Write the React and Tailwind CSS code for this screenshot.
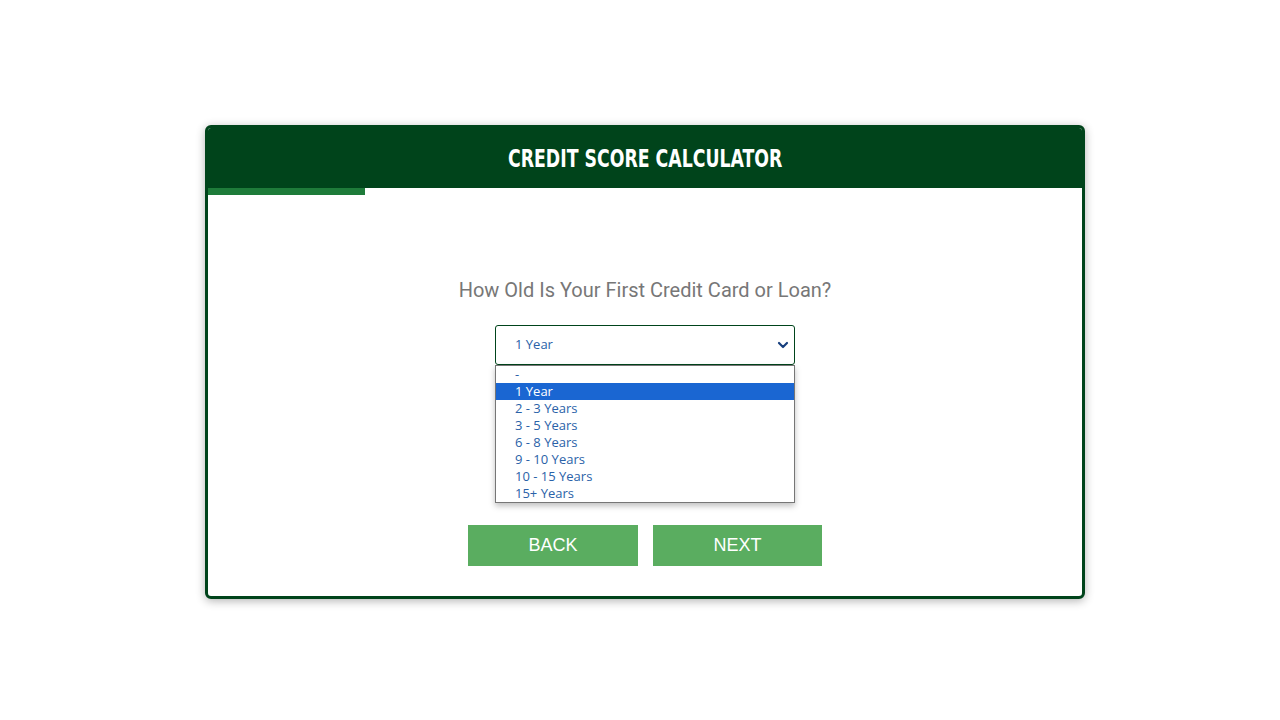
import { useState } from 'react'

const OPTIONS = ['-', '1 Year', '2 - 3 Years', '3 - 5 Years', '6 - 8 Years', '9 - 10 Years', '10 - 15 Years', '15+ Years']

export default function App() {
  const [value, setValue] = useState('1 Year')
  const [open, setOpen] = useState(true)

  return (
    <div className="min-h-screen bg-white flex justify-center pt-[125px] pl-[10px]">
      <div className="w-[880px] h-[474px] border-[3px] border-[#00441b] rounded-md bg-white shadow-[0_2px_10px_rgba(0,0,0,0.3)] flex flex-col overflow-hidden">
        {/* Header */}
        <div className="h-[60px] bg-[#00441b] flex items-center justify-center">
          <h1 className="inline-block scale-x-[0.77] text-white text-[25px] font-bold uppercase pt-[1px] whitespace-nowrap" style={{ fontFamily: '"DejaVu Sans Condensed", "DejaVu Sans", sans-serif' }}>
            Credit Score Calculator
          </h1>
        </div>
        {/* Progress bar */}
        <div className="h-[7px] w-[157px] bg-[#1e7b3a]" />

        <div className="flex flex-col items-center pt-[81px]">
          <p className="text-[20px] leading-[28px] text-[#777777]" style={{ fontFamily: 'Roboto, sans-serif' }}>
            How Old Is Your First Credit Card or Loan?
          </p>

          <div className="relative mt-[21px] w-[300px]">
            <button
              onClick={() => setOpen((o) => !o)}
              className="w-full h-[40px] border border-[#00441b] rounded-[3px] bg-white flex items-center justify-between pl-[19px] pr-[4px] text-[13px] text-[#2a62a8]"
              style={{ fontFamily: '"Open Sans", sans-serif' }}
            >
              <span>{value}</span>
              <svg width="14" height="14" viewBox="0 0 14 14" className="text-[#173f7e]">
                <path d="M3 5 L7 9 L11 5" fill="none" stroke="currentColor" strokeWidth="2.2" strokeLinecap="round" strokeLinejoin="round" />
              </svg>
            </button>

            {open && (
              <ul
                className="absolute left-0 top-[40px] w-full border border-[#767676] bg-white shadow-[0_3px_6px_rgba(0,0,0,0.25)] z-10 text-[13px]"
                style={{ fontFamily: '"Open Sans", sans-serif' }}
              >
                {OPTIONS.map((opt) => (
                  <li
                    key={opt}
                    onClick={() => { setValue(opt); setOpen(false) }}
                    className={
                      opt === value
                        ? 'h-[17px] leading-[17px] pl-[19px] bg-[#1a66d2] text-white cursor-default'
                        : 'h-[17px] leading-[17px] pl-[19px] text-[#2a62a8] cursor-default'
                    }
                  >
                    {opt}
                  </li>
                ))}
              </ul>
            )}
          </div>

          <div className="flex gap-[15px] mt-[160px]">
            <button className="w-[170px] h-[41px] bg-[#5aad60] text-white text-[18px]" style={{ fontFamily: '"Liberation Sans", Arial, sans-serif' }}>
              BACK
            </button>
            <button className="w-[169px] h-[41px] bg-[#5aad60] text-white text-[18px]" style={{ fontFamily: '"Liberation Sans", Arial, sans-serif' }}>
              NEXT
            </button>
          </div>
        </div>
      </div>
    </div>
  )
}
